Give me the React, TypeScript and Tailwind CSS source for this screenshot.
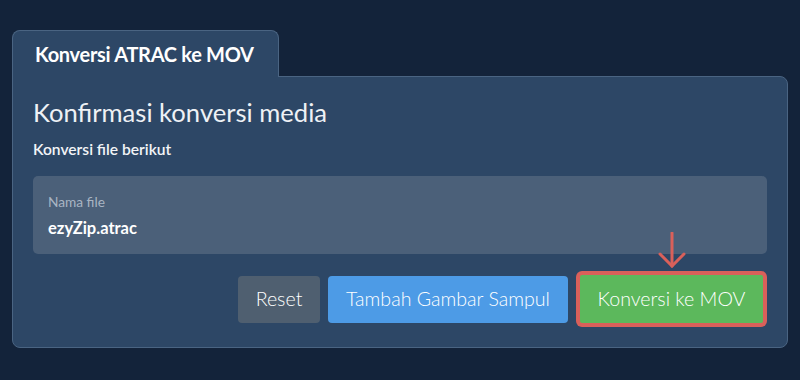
import React from "react";

export default function App() {
  return (
    <div
      className="w-[800px] h-[380px] bg-[#13233a] pt-[30px] px-[12px] overflow-hidden"
      style={{ fontFamily: "Lato, 'Noto Sans', sans-serif" }}
    >
      <div className="relative z-10 -mb-px w-[267px] h-[47px] bg-[#2d4766] border border-b-0 border-[#4a6482] rounded-t-[8px] pl-[22px] flex items-center">
        <span className="text-[20px] font-bold text-white tracking-[-0.3px]">Konversi ATRAC ke MOV</span>
      </div>
      <div className="w-[776px] bg-[#2d4766] border border-[#4a6482] rounded-b-[8px] rounded-tr-[8px] px-[20px] pt-[20px] pb-[20px]">
        <h1 className="text-[25.6px] leading-[30px] text-[#eef1f5] font-normal">Konfirmasi konversi media</h1>
        <p className="mt-[12px] text-[15.6px] leading-[20px] font-semibold text-[#f2f4f7]">Konversi file berikut</p>
        <div className="mt-[17px] h-[78px] bg-[#4b6079] rounded-[5px] px-[15px] pt-[17px]">
          <div className="text-[13.7px] leading-[18px] text-[#a9b5c3]">Nama file</div>
          <div className="mt-[6px] text-[16.5px] leading-[22px] font-bold text-white">ezyZip.atrac</div>
        </div>
        <div className="mt-[17px] flex justify-end items-center gap-2">
          <button className="w-[82px] h-[47px] rounded-[4px] bg-[#4f5f70] text-white text-[19.6px] font-light">Reset</button>
          <button className="w-[240px] h-[47px] rounded-[4px] bg-[#4d9be6] text-white text-[19.6px] font-light">Tambah Gambar Sampul</button>
          <div className="relative p-[4px] bg-[#d9605a] rounded-[6px]">
            <svg
              className="absolute bottom-full left-1/2 -translate-x-1/2 mb-[3px]"
              width="28"
              height="36"
              viewBox="0 0 28 36"
              fill="none"
              stroke="#d9605a"
              strokeWidth="3"
              strokeLinecap="round"
            >
              <line x1="14" y1="1" x2="14" y2="34" />
              <polyline points="2,22 14,34 26,22" strokeLinejoin="miter" />
            </svg>
            <button className="block w-[183px] h-[48px] rounded-[2px] bg-[#5cb85c] text-white text-[19.6px] font-light">Konversi ke MOV</button>
          </div>
        </div>
      </div>
    </div>
  );
}
